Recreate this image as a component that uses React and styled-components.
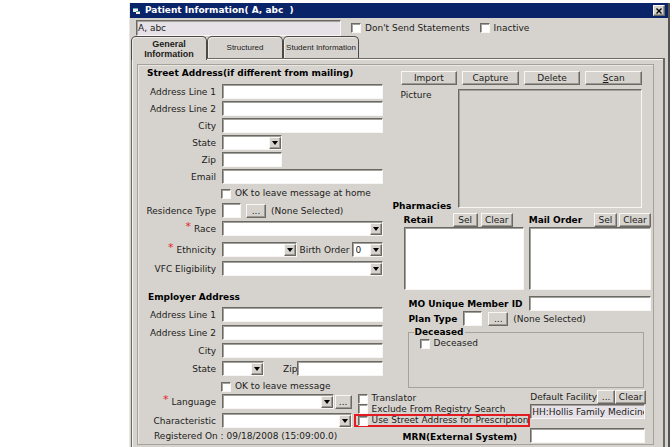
import React, { useId } from "react";
import styled, { createGlobalStyle, css } from "styled-components";

const face = "#d6d3ce";
const dark = "#6b6963";
const mid = "#a5a29c";
const light = "#f7f6f3";

const GlobalStyle = createGlobalStyle`
  * { box-sizing: border-box; }
  body { margin: 0; background: #fff; }
  body, input, select, button {
    font-family: "DejaVu Sans", Verdana, sans-serif;
    font-size: 9px;
    color: #1c1b1a;
  }
`;

const sunken = css`
  border: 1px solid;
  border-color: ${dark} ${light} ${light} ${dark};
  box-shadow: inset 1px 1px #a3a19c;
`;

const raised = css`
  border: 1px solid;
  border-color: ${light} ${dark} ${dark} ${light};
  box-shadow: inset -1px -1px #9c9993;
`;

const Page = styled.main`
  padding: 3px 2px 0 129px;
`;

const Window = styled.section`
  background: ${face};
  border-right: 2px solid #55534f;
  border-left: 1px solid #e9e7e3;
`;

const TitleBar = styled.header`
  display: flex;
  align-items: center;
  gap: 4px;
  height: 15px;
  padding: 0 3px;
  background: #0a246a;
`;

const Title = styled.h1`
  flex: 1;
  margin: 0;
  font-size: 9px;
  line-height: 15px;
  color: #fff;
  white-space: pre;
`;

const CloseButton = styled.button`
  ${raised}
  display: grid;
  place-items: center;
  width: 12px;
  height: 11px;
  padding: 0;
  background: ${face};
`;

const PatientBar = styled.div`
  display: flex;
  align-items: center;
  gap: 10px;
  height: 18px;
  padding: 2px 6px 0;
`;

const Input = styled.input`
  ${sunken}
  flex: ${(p) => (p.$width ? "none" : "1")};
  width: ${(p) => (p.$width ? `${p.$width}px` : "auto")};
  min-width: 0;
  height: ${(p) => p.$height || 15}px;
  padding: 0 0 0 1px;
  border-radius: 0;
  background: ${(p) => (p.readOnly ? "#e5e1e6" : "#fff")};
`;

const Tabs = styled.div`
  display: flex;
  align-items: flex-start;
  padding-left: 1px;
`;

const Tab = styled.button`
  position: relative;
  z-index: ${(p) => (p.$active ? 1 : 0)};
  width: 76px;
  height: ${(p) => (p.$active ? 24 : 22)}px;
  margin-bottom: ${(p) => (p.$active ? -2 : 0)}px;
  padding: 0 1px;
  border: 1px solid #4c4a47;
  border-bottom: 0;
  border-radius: 5px 5px 0 0;
  box-shadow: inset 1px 1px #eceae6;
  background: ${face};
  font-family: "Liberation Sans", Arial, sans-serif;
  font-size: ${(p) => (p.$active ? 9 : 8)}px;
  font-weight: ${(p) => (p.$active ? 700 : 400)};
  line-height: 10px;
  white-space: ${(p) => (p.$active ? "normal" : "nowrap")};
`;

const TabPanel = styled.div`
  margin: 0 3px 0 1px;
  padding: 5px 9px 2px 5px;
  border: 1px solid ${dark};
  border-right-width: 2px;
  box-shadow: inset 1px 1px ${light};
`;

const FormGrid = styled.form`
  display: grid;
  grid-template-columns: minmax(0, 214fr) minmax(0, 41fr) minmax(0, 261fr);
  grid-template-rows: auto 10px auto;
  border: 1px solid ${mid};
  box-shadow: inset 1px 1px #e8e6e2;
`;

const AddressArea = styled.div`
  grid-area: 1 / 1 / 2 / 3;
  padding-right: 10px;
`;

const SideArea = styled.div`
  grid-area: 1 / 3 / 3 / 4;
  padding: 6px 2px 0 0;
`;

const LanguageArea = styled.div`
  grid-area: 2 / 1 / 4 / 2;
`;

const ExtrasArea = styled.div`
  grid-area: 3 / 2 / 4 / 4;
  display: grid;
  grid-template-columns: minmax(0, 177fr) minmax(0, 123fr);
  padding-left: 2px;
`;

const Heading = styled.h2`
  margin: 0;
  padding: ${(p) => p.$pad || "0"};
  font-size: 9px;
  line-height: 12px;
  color: #000;
  white-space: nowrap;
`;

const Row = styled.div`
  display: flex;
  align-items: center;
  height: 15px;
  margin-bottom: ${(p) => p.$after ?? 2}px;
  white-space: nowrap;
`;

const FieldLabel = styled.label`
  flex: none;
  width: 78px;
  margin-right: 6px;
  line-height: 12px;
  text-align: right;
`;

const Label = styled.label`
  flex: none;
  line-height: 12px;
  font-weight: ${(p) => (p.$bold ? 700 : 400)};
  color: ${(p) => (p.$bold ? "#000" : "inherit")};
`;

const Star = styled.span`
  margin-right: 3px;
  color: #e0262c;
  font-size: 11px;
  line-height: 8px;
  vertical-align: top;
`;

const Offset = styled.div`
  display: flex;
  align-items: center;
  padding-left: 83px;
`;

const SelectBox = styled.div`
  position: relative;
  display: flex;
  flex: ${(p) => (p.$width ? "none" : "1")};
  width: ${(p) => (p.$width ? `${p.$width}px` : "auto")};
  min-width: 0;
  height: 15px;
`;

const NativeSelect = styled.select`
  ${sunken}
  appearance: none;
  width: 100%;
  padding: 0 13px 0 3px;
  border-radius: 0;
  background: #fff;
`;

const ArrowBox = styled.span`
  ${raised}
  position: absolute;
  top: 2px;
  right: 1px;
  bottom: 1px;
  display: grid;
  place-items: center;
  width: 12px;
  background: ${face};
  pointer-events: none;
`;

const Button = styled.button`
  ${raised}
  flex: ${(p) => (p.$width ? "none" : "1")};
  width: ${(p) => (p.$width ? `${p.$width}px` : "auto")};
  height: 14px;
  padding: 0;
  background: ${face};
  line-height: 10px;
`;

const Tick = styled.input`
  ${sunken}
  appearance: none;
  flex: none;
  width: 10px;
  height: 10px;
  margin: 0;
  background: #fff;
`;

const TickLabel = styled.label`
  display: flex;
  align-items: center;
  gap: 4px;
  height: ${(p) => p.$height || 11}px;
  line-height: 11px;
  white-space: nowrap;
`;

const ButtonBar = styled.div`
  display: flex;
  gap: 5px;
  padding: 0 9px 4px 8px;
`;

const PictureRow = styled.div`
  display: flex;
  height: 119px;
  padding: 0 9px 0 0;
`;

const PictureLabels = styled.div`
  display: flex;
  flex-direction: column;
  justify-content: space-between;
  width: 65px;
  margin-bottom: -4px;

  & > span { padding-left: 8px; line-height: 12px; }
`;

const PictureFrame = styled.div`
  ${sunken}
  flex: 1;
`;

const PharmacyGrid = styled.div`
  display: grid;
  grid-template-columns: minmax(0, 120fr) minmax(0, 122fr);
  column-gap: 5px;
  padding: 4px 0 6px 11px;
`;

const PharmacyHead = styled.div`
  display: flex;
  align-items: center;
  justify-content: space-between;
  height: 15px;
  padding-right: ${(p) => p.$right || 0}px;
`;

const ButtonPair = styled.div`
  display: flex;
  gap: ${(p) => p.$gap || 2}px;
`;

const PharmacyList = styled.textarea`
  ${sunken}
  width: 100%;
  height: 63px;
  padding: 0;
  resize: none;
  background: #fff;
`;

const Indent = styled.div`
  padding-left: 16px;
`;

const Fill = styled.div`
  flex: 1;
`;

const Gap = styled.span`
  flex: none;
  width: ${(p) => p.$size}px;
`;

const DeceasedGroup = styled.fieldset`
  height: 62px;
  margin: 0 7px 0 15px;
  padding: 0 11px;
  border: 1px solid ${mid};

  legend {
    margin-left: -6px;
    padding: 0 1px;
    color: #000;
    font-weight: 700;
    line-height: 12px;
  }
`;

const OptionList = styled.div`
  display: flex;
  flex-direction: column;
  padding-top: 4px;
`;

const OptionRow = styled.div`
  padding-left: 4px;
`;

const Highlight = styled.div`
  padding-left: 2px;
  border: 2px solid #e31b23;
`;

const Facility = styled.div`
  padding-right: 8px;
`;

const RightText = styled.div`
  padding: 4px 13px 0 0;
  text-align: right;
`;

const Registered = styled.p`
  margin: 0;
  padding: 2px 0 2px 16px;
  line-height: 12px;
  white-space: nowrap;
`;

function Select({ id, width, value = "" }) {
  return (
    <SelectBox $width={width}>
      <NativeSelect id={id} defaultValue={value}>
        <option>{value}</option>
      </NativeSelect>
      <ArrowBox>
        <svg width="6" height="4" viewBox="0 0 6 4" aria-hidden="true">
          <path d="M0 0h6L3 4z" fill="#000" />
        </svg>
      </ArrowBox>
    </SelectBox>
  );
}

function Field({ label, required, select, width, after, children }) {
  const id = useId();
  return (
    <Row $after={after}>
      <FieldLabel htmlFor={id}>
        {required && <Star>*</Star>}
        {label}
      </FieldLabel>
      {select ? <Select id={id} width={width} /> : <Input id={id} $width={width} />}
      {children}
    </Row>
  );
}

function Check({ label, height }) {
  return (
    <TickLabel $height={height}>
      <Tick type="checkbox" />
      {label}
    </TickLabel>
  );
}

export default function App() {
  return (
    <Page>
      <GlobalStyle />
      <Window>
        <TitleBar>
          <svg width="8" height="9" viewBox="0 0 8 9" aria-hidden="true">
            <path d="M0 2h5v4H0z" fill="#e8eef0" />
            <path d="M0 2h5v1H0z" fill="#5aa5b5" />
            <path d="M3 5h4v3H3z" fill="#f3f1e6" />
            <path d="M3 5h4v1H3z" fill="#58a39a" />
          </svg>
          <Title>{"Patient Information( A, abc  )"}</Title>
          <CloseButton type="button" aria-label="Close">
            <svg width="6" height="6" viewBox="0 0 6 6" aria-hidden="true">
              <path d="M0.5 0.5l5 5M5.5 0.5l-5 5" stroke="#000" strokeWidth="1.4" />
            </svg>
          </CloseButton>
        </TitleBar>
        <PatientBar>
          <Input $width={205} $height={16} readOnly aria-label="Patient" defaultValue="A, abc" />
          <Check label="Don't Send Statements" />
          <Check label="Inactive" />
        </PatientBar>
        <Tabs role="tablist">
          <Tab type="button" role="tab" aria-selected="true" $active>General Information</Tab>
          <Tab type="button" role="tab" aria-selected="false">Structured</Tab>
          <Tab type="button" role="tab" aria-selected="false">Student Information</Tab>
        </Tabs>
        <TabPanel role="tabpanel">
          <FormGrid>
            <AddressArea>
              <Heading $pad="2px 0 5px 9px">Street Address(if different from mailing)</Heading>
              <Field label="Address Line 1" />
              <Field label="Address Line 2" />
              <Field label="City" />
              <Field label="State" select width={60} />
              <Field label="Zip" width={60} />
              <Field label="Email" />
              <Row>
                <Offset><Check label="OK to leave message at home" /></Offset>
              </Row>
              <Field label="Residence Type" width={19} after={3}>
                <Gap $size={5} />
                <Button type="button" $width={20}>...</Button>
                <Gap $size={5} />
                <span>(None Selected)</span>
              </Field>
              <Field label="Race" required select after={6} />
              <Field label="Ethnicity" required select width={75} after={4}>
                <Fill />
                <Label htmlFor="birth-order">Birth Order</Label>
                <Gap $size={2} />
                <Select id="birth-order" width={31} value="0" />
              </Field>
              <Field label="VFC Eligibility" select after={15} />
              <Heading $pad="0 0 4px 10px">Employer Address</Heading>
              <Field label="Address Line 1" after={3} />
              <Field label="Address Line 2" after={3} />
              <Field label="City" after={3} />
              <Field label="State" select width={42} after={3}>
                <Gap $size={19} />
                <Label htmlFor="employer-zip">Zip</Label>
                <Input id="employer-zip" />
              </Field>
            </AddressArea>

            <SideArea>
              <ButtonBar>
                <Button type="button">Import</Button>
                <Button type="button">Capture</Button>
                <Button type="button">Delete</Button>
                <Button type="button"><u>S</u>can</Button>
              </ButtonBar>
              <PictureRow>
                <PictureLabels>
                  <span>Picture</span>
                  <Heading>Pharmacies</Heading>
                </PictureLabels>
                <PictureFrame />
              </PictureRow>
              <PharmacyGrid>
                <PharmacyHead $right={11}>
                  <Label $bold htmlFor="retail">Retail</Label>
                  <ButtonPair $gap={3}>
                    <Button type="button" $width={25}>Sel</Button>
                    <Button type="button" $width={32}>Clear</Button>
                  </ButtonPair>
                </PharmacyHead>
                <PharmacyHead>
                  <Label $bold htmlFor="mail-order">Mail Order</Label>
                  <ButtonPair>
                    <Button type="button" $width={23}>Sel</Button>
                    <Button type="button" $width={32}>Clear</Button>
                  </ButtonPair>
                </PharmacyHead>
                <PharmacyList id="retail" />
                <PharmacyList id="mail-order" />
              </PharmacyGrid>
              <Indent>
                <Row $after={0}>
                  <Label $bold htmlFor="member-id">MO Unique Member ID</Label>
                  <Fill />
                  <Input id="member-id" $width={122} />
                </Row>
                <Row $after={0}>
                  <Label $bold htmlFor="plan-type">Plan Type</Label>
                  <Gap $size={6} />
                  <Input id="plan-type" $width={19} />
                  <Gap $size={6} />
                  <Button type="button" $width={20}>...</Button>
                  <Gap $size={5} />
                  <span>(None Selected)</span>
                </Row>
              </Indent>
              <DeceasedGroup>
                <legend>Deceased</legend>
                <Check label="Deceased" />
              </DeceasedGroup>
            </SideArea>

            <LanguageArea>
              <Row $after={0}>
                <Offset><Check label="OK to leave message" /></Offset>
              </Row>
              <Field label="Language" required select after={4}>
                <Gap $size={1} />
                <Button type="button" $width={17}>...</Button>
              </Field>
              <Field label="Characteristic" select after={0} />
              <Registered>Registered On : 09/18/2008 (15:09:00.0)</Registered>
            </LanguageArea>

            <ExtrasArea>
              <OptionList>
                <OptionRow><Check label="Translator" height={11} /></OptionRow>
                <OptionRow><Check label="Exclude From Registry Search" height={10} /></OptionRow>
                <Highlight><Check label="Use Street Address for Prescription" height={9} /></Highlight>
                <RightText><Label $bold htmlFor="mrn">MRN(External System)</Label></RightText>
              </OptionList>
              <Facility>
                <Row $after={0}>
                  <Label htmlFor="facility">Default Facility</Label>
                  <Fill />
                  <Button type="button" $width={18}>...</Button>
                  <Button type="button" $width={31}>Clear</Button>
                </Row>
                <Row $after={9}>
                  <Input id="facility" readOnly defaultValue="HH:Hollis Family Medicine" />
                </Row>
                <Row $after={0}>
                  <Input id="mrn" />
                </Row>
              </Facility>
            </ExtrasArea>
          </FormGrid>
        </TabPanel>
      </Window>
    </Page>
  );
}
